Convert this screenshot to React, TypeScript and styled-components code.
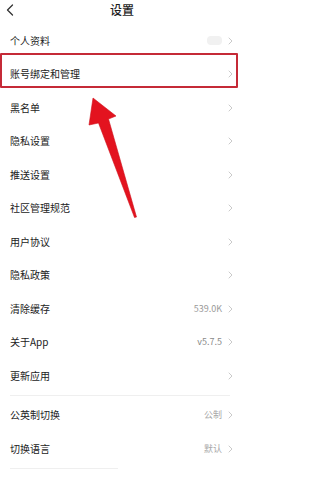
import styled, { createGlobalStyle } from "styled-components";

const GlobalStyle = createGlobalStyle`
  html, body {
    margin: 0;
    padding: 0;
    background: #ffffff;
  }

  body {
    font-family: "Noto Sans CJK SC", "Noto Sans", sans-serif;
    -webkit-font-smoothing: antialiased;
  }
`;

interface Item {
  label: string;
  value?: string;
  valueTone?: "dark" | "light";
  avatar?: boolean;
}

const mainItems: Item[] = [
  { label: "个人资料", avatar: true },
  { label: "账号绑定和管理" },
  { label: "黑名单" },
  { label: "隐私设置" },
  { label: "推送设置" },
  { label: "社区管理规范" },
  { label: "用户协议" },
  { label: "隐私政策" },
  { label: "清除缓存", value: "539.0K" },
  { label: "关于App", value: "v5.7.5", valueTone: "dark" },
  { label: "更新应用" },
];

const extraItems: Item[] = [
  { label: "公英制切换", value: "公制", valueTone: "light" },
  { label: "切换语言", value: "默认", valueTone: "light" },
];

const Page = styled.div`
  position: relative;
  width: 244px;
  height: 480px;
  overflow: hidden;
  background: #ffffff;
`;

const Header = styled.header`
  height: 24px;
  display: flex;
  align-items: flex-start;
  justify-content: center;
  position: relative;
`;

const BackButton = styled.button`
  position: absolute;
  left: 5px;
  top: 3px;
  padding: 0;
  border: 0;
  background: none;
  width: 10px;
  height: 14px;

  svg {
    display: block;
  }
`;

const Title = styled.h1`
  margin: 0;
  font-size: 12px;
  line-height: 20px;
  font-weight: 500;
  color: #1f1f1f;
`;

const List = styled.div`
  display: flex;
  flex-direction: column;
`;

const Row = styled.div`
  height: 33.5px;
  display: flex;
  align-items: center;
  justify-content: space-between;
  padding: 0 11px 0 10px;
`;

const Label = styled.span`
  font-size: 10px;
  line-height: 14px;
  color: #222222;
`;

const RowEnd = styled.div`
  display: flex;
  align-items: center;
  gap: 6px;
`;

const Value = styled.span<{ $tone?: "dark" | "light" }>`
  font-size: 9px;
  line-height: 12px;
  color: ${({ $tone }) =>
    $tone === "dark" ? "#8a8a8a" : $tone === "light" ? "#a8a8a8" : "#9a9a9a"};
`;

const AvatarStub = styled.span`
  width: 15px;
  height: 9px;
  border-radius: 4px;
  background: #f1f1f1;
`;

const Divider = styled.div<{ $short?: boolean }>`
  height: 1px;
  background: #efefef;
  margin: ${({ $short }) => ($short ? "2px 0 0 10px" : "2px 14px 3px 10px")};
  width: ${({ $short }) => ($short ? "108px" : "auto")};
`;

const HighlightBox = styled.div`
  position: absolute;
  left: 0;
  top: 53px;
  width: 238px;
  height: 35px;
  box-sizing: border-box;
  border: 2px solid #c52a37;
  border-radius: 1px;
  pointer-events: none;
`;

const ArrowLayer = styled.svg`
  position: absolute;
  left: 0;
  top: 0;
  pointer-events: none;
`;

const Chevron = () => (
  <svg width="5" height="8" viewBox="0 0 5 8">
    <path
      d="M1 1 L4 4 L1 7"
      fill="none"
      stroke="#c4c4c4"
      strokeWidth="0.9"
      strokeLinecap="round"
      strokeLinejoin="round"
    />
  </svg>
);

const SettingRow = ({ item }: { item: Item }) => (
  <Row>
    <Label>{item.label}</Label>
    <RowEnd>
      {item.avatar && <AvatarStub />}
      {item.value && <Value $tone={item.valueTone}>{item.value}</Value>}
      <Chevron />
    </RowEnd>
  </Row>
);

export default function App() {
  return (
    <>
      <GlobalStyle />
      <Page>
        <Header>
          <BackButton aria-label="返回">
            <svg width="10" height="14" viewBox="0 0 10 14">
              <path
                d="M7.5 2 L2.5 7 L7.5 12"
                fill="none"
                stroke="#333333"
                strokeWidth="1.3"
                strokeLinecap="round"
                strokeLinejoin="round"
              />
            </svg>
          </BackButton>
          <Title>设置</Title>
        </Header>

        <List>
          {mainItems.map((item) => (
            <SettingRow key={item.label} item={item} />
          ))}
        </List>
        <Divider />
        <List>
          {extraItems.map((item) => (
            <SettingRow key={item.label} item={item} />
          ))}
        </List>
        <Divider $short />

        <HighlightBox />
        <ArrowLayer width="244" height="480" viewBox="0 0 244 480">
          <polygon
            points="93,98 116,116 108.5,119 136.5,217 134.5,217.5 98.5,123 89,125"
            fill="#e3131f"
            stroke="#d0101b"
            strokeWidth="0.6"
            strokeLinejoin="round"
          />
        </ArrowLayer>
      </Page>
    </>
  );
}
